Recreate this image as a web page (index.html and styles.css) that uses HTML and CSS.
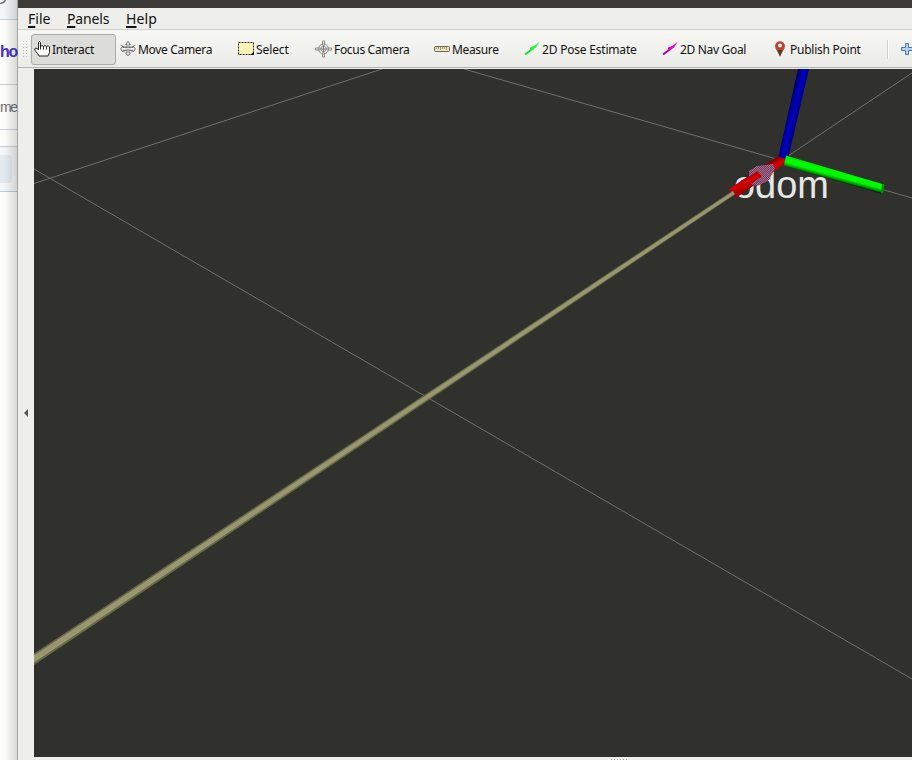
FILE: index.html
```html
<!DOCTYPE html>
<html lang="en">
<head>
<meta charset="utf-8">
<title>RViz</title>
<link rel="stylesheet" href="styles.css">
</head>
<body>
<div class="desktop">
  <aside class="behind">
    <div class="behind-top"><svg width="18" height="19"><path d="M0 3.5Q5 3 5.5-1" fill="none" stroke="#777" stroke-width="1.6"/></svg></div>
    <div class="behind-link">ho</div>
    <div class="behind-meta">me</div>
    <div class="behind-gap"></div>
    <div class="behind-chip"><span></span></div>
    <div class="behind-shadow"></div>
  </aside>
  <main class="window">
    <div class="titlebar"></div>
    <nav class="menubar"><span class="file"><u>F</u>ile</span><span class="panels"><u>P</u>anels</span><span class="help"><u>H</u>elp</span></nav>
    <div class="toolbar">
      <svg class="grip" width="5" height="18"><path d="M1.5 1v17M4.5 1v17" stroke="#bfc0bc" stroke-dasharray="1 2"/></svg>
      <button class="tool interact active"><svg width="16" height="18"><path d="M4.5 9.5V2.5Q5.5 .5 6.5 2.5V6.5Q8 4.5 9.5 6.5Q11 4.5 12.5 6.5Q14.5 4.5 15.5 7V12.5L14 16H5L3.5 13.5L1 10.5Q.3 8.2 2 8Z" fill="#fff" stroke="#222"/><path d="M6.5 6v3.5M9.5 6.5v3M12.5 6.5v3" stroke="#222"/></svg><span>Interact</span></button>
      <button class="tool move"><svg width="16" height="18"><path d="M8 1.5L10.5 4.5H9V7.5H13V6L15.5 9L13 12V10.5H9V13H10.5L8 16L5.5 13H7V10.5H3V12L.5 9L3 6V7.5H7V4.5H5.5Z" fill="#eee" stroke="#666" stroke-width=".9"/><path d="M.5 5Q8 10 15.5 5M3 12Q8 7 13 12" stroke="#777" stroke-width=".8" fill="none"/></svg><span>Move Camera</span></button>
      <button class="tool select"><svg width="16" height="18"><path d="M.5 2.5h15v12H.5Z" fill="#faf3b5" stroke="#28251e" stroke-dasharray="2 1"/><path d="M12.5 15L16 11.5V15Z" fill="#000"/></svg><span>Select</span></button>
      <button class="tool focus"><svg width="16" height="18"><g fill="none" stroke="#8b8b8b"><circle cx="7.5" cy="9" r="5"/><circle cx="7.5" cy="9" r="2.7"/><path d="M6.5 5.5V1h2V5.500M6.5 12.5v4.500h2V12.500M4 8H-.5v2H4M11 8h4.5v2H11"/><path d="M7.5 5.5v7M4 9h7" stroke="#777"/></g></svg><span>Focus Camera</span></button>
      <button class="tool measure"><svg width="16" height="18"><rect x=".5" y="6.5" width="15" height="5" rx="1" fill="#eee5b9" stroke="#68665d"/><path d="M2.5 7v2M4.5 7v2M6.5 7v3M8.5 7v2M10.5 7v2M12.5 7v3" stroke="#a39a77"/></svg><span>Measure</span></button>
      <button class="tool pose"><svg width="16" height="18"><path d="M1 14.500L9 8.500" stroke="#1cdd32" stroke-width="2"/><path d="M6 7.500L10 6L15.500 2L12 7.500L9 9.500L6 11Z" fill="#25f43b"/></svg><span>2D Pose Estimate</span></button>
      <button class="tool goal"><svg width="16" height="18"><path d="M1 14.500L9 8.500" stroke="#b0009a" stroke-width="2"/><path d="M6 7.500L10 6L15.500 2L12 7.500L9 9.500L6 11Z" fill="#e300c5"/></svg><span>2D Nav Goal</span></button>
      <button class="tool publish"><svg width="16" height="18"><path d="M8 16.5L5.5 11.5Q3 8.5 3 6.3A5 5 0 0 1 13 6.3Q13 8.5 10.5 11.5Z" fill="#b54635"/><path d="M5 10h6L8 16.5Z" fill="#573c24"/><circle cx="8" cy="5.5" r="1.9" fill="#eee"/></svg><span>Publish Point</span></button>
      <i class="separator"></i>
      <svg class="plus" width="12" height="14"><path d="M4.5 1.5h3v4h4v3h-4v4h-3v-4h-4v-3h4Z" fill="#b9d1ec" stroke="#4577a8"/></svg>
    </div>
    <div class="workspace">
      <div class="collapse"><svg width="5" height="8"><path d="M4 0V8L0 4Z" fill="#555"/></svg></div>
      <svg class="scene" width="878" height="688" viewBox="34 69 878 688">
        <defs>
          <linearGradient id="blue" gradientUnits="userSpaceOnUse" x1="787" y1="108" x2="799" y2="111"><stop offset="0" stop-color="#00002e"/><stop offset=".25" stop-color="#000080"/><stop offset=".6" stop-color="#0000c4"/><stop offset="1" stop-color="#000080"/></linearGradient>
          <linearGradient id="green" gradientUnits="userSpaceOnUse" x1="835" y1="169" x2="832" y2="180"><stop offset="0" stop-color="#00e000"/><stop offset=".25" stop-color="#00ff00"/><stop offset=".6" stop-color="#00f500"/><stop offset=".85" stop-color="#008900"/><stop offset="1" stop-color="#001c00"/></linearGradient>
          <linearGradient id="red" gradientUnits="userSpaceOnUse" x1="754" y1="171" x2="760" y2="182"><stop offset="0" stop-color="#850000"/><stop offset=".4" stop-color="#d90000"/><stop offset="1" stop-color="#a00000"/></linearGradient>
          <pattern id="weave" width="2" height="2" patternUnits="userSpaceOnUse"><rect width="2" height="2" fill="#604a52"/><path d="M0 0h1v1H0zM1 1h1v1H1z" fill="#b3609b"/></pattern>
        </defs>
        <path d="M34 183.500L382 69M464 69L912 198M34 169L912 679M782 160L912 73" stroke="#77777a" stroke-width=".9" fill="none"/>
        <text class="frame-name" x="734" y="198" textLength="95" lengthAdjust="spacingAndGlyphs">odom</text>
        <path d="M798 69H809L788 159L778 158Z" fill="url(#blue)"/>
        <path d="M786 155.500L884 184.500L882 194L784 165.500Z" fill="url(#green)"/>
        <path d="M882 184l3 1-2 3 2 2-4 4Z" fill="#008c00"/>
        <path d="M778 156L785 159L783 165L736 198L729 189Z" fill="url(#red)"/>
        <path d="M749 171L757 166L773 164L775 169L768 181L757 186L751 184L762 176L757 171L749 177Z" fill="url(#weave)"/>
        <path d="M34 653.500L733 190.500L735 194.500L34 665Z" fill="#666948"/>
        <path d="M34 655.500L733 191.500L734.500 194L34 662.500Z" fill="#98976f"/>
      </svg>
    </div>
    <div class="bottom"><svg width="18" height="3"><path d="M1 2.5H18" stroke="#aaa" stroke-dasharray="1 2"/></svg></div>
  </main>
</div>
</body>
</html>
```
FILE: styles.css
```css
* { box-sizing: border-box; }
body { margin: 0; overflow: hidden; font-family: "Noto Sans", "Open Sans", sans-serif; color: #111; }
svg { display: block; flex: none; }
.desktop { display: flex; width: 912px; height: 760px; }
.behind { position: relative; width: 17px; height: 760px; background: #fdfefb; font-family: "Liberation Sans", sans-serif; }
.behind-top { height: 20px; background: #f3f6f8; border-bottom: 1px solid #d0d5dc; }
.behind-link { height: 65px; padding-top: 22px; border-bottom: 1px solid #c9cdd5; color: #4330c5; font-weight: bold; font-size: 16px; line-height: 20px; letter-spacing: -1.3px; }
.behind-meta { height: 45px; padding-top: 13px; border-bottom: 1px solid #c9cdd5; color: #666a70; font-size: 14px; line-height: 18px; letter-spacing: -1.3px; }
.behind-gap { height: 17px; border-bottom: 1px solid #c9cdd5; }
.behind-chip { height: 45px; padding-top: 8px; border-bottom: 1px solid #bdc9d9; background: #f3f6fa; }
.behind-chip span { display: block; width: 12px; height: 28px; border-radius: 0 4px 4px 0; background: #e2eaf0; }
.behind-shadow { position: absolute; inset: 0 0 0 4px; background: linear-gradient(90deg, transparent, rgba(70,70,70,.2)); }
.window { width: 895px; height: 760px; border-left: 1px solid #a4a69f; background: #eeefeb; }
.titlebar { height: 8px; background: #3c3b37; }
.menubar { display: flex; height: 22px; padding-left: 10px; border-bottom: 1px solid #d0d1cd; background: #eeefea; font-size: 14px; line-height: 21px; white-space: nowrap; }
.menubar u { text-decoration-thickness: 2px; text-underline-offset: 2px; }
.file { width: 39px; }
.panels { width: 59px; letter-spacing: -.15px; }
.help { letter-spacing: .1px; }
.toolbar { display: flex; align-items: center; height: 38px; padding-top: 1px; overflow: hidden; border-bottom: 1px solid #b2b4ab; background: linear-gradient(#f7f7f4, #ebece7); }
.grip { margin-left: 4px; }
.tool { display: flex; flex: none; align-items: center; gap: 2px; height: 31px; padding: 0 0 0 2px; border: 1px solid transparent; background: none; color: #111; font: 12px/16px "Noto Sans", sans-serif; letter-spacing: -.25px; white-space: nowrap; }
.tool span { padding-top: 1px; }
.active { border-color: #aaaca6; border-radius: 3px; background: #dcddd8; }
.interact { width: 85px; margin: 0 1px 0 4px; }
.move { width: 118px; letter-spacing: -.32px; }
.select { width: 78px; letter-spacing: -.1px; }
.focus { width: 118px; letter-spacing: -.32px; }
.focus svg { overflow: visible; }
.measure { width: 90px; letter-spacing: -.35px; }
.pose { width: 138px; letter-spacing: -.2px; }
.goal { width: 110px; letter-spacing: -.32px; }
.publish { width: 118px; }
.separator { width: 2px; height: 19px; border-left: 1px solid #cfd0cb; border-right: 1px solid #fff; }
.plus { margin-left: 12px; }
.workspace { display: flex; height: 689px; padding-top: 1px; }
.collapse { display: flex; width: 16px; align-items: center; padding-left: 6px; }
.scene { background: #30302c; }
.frame-name { font: 38px "Liberation Sans", sans-serif; fill: #e6e6e5; }
.bottom { height: 3px; padding-left: 592px; }
```
